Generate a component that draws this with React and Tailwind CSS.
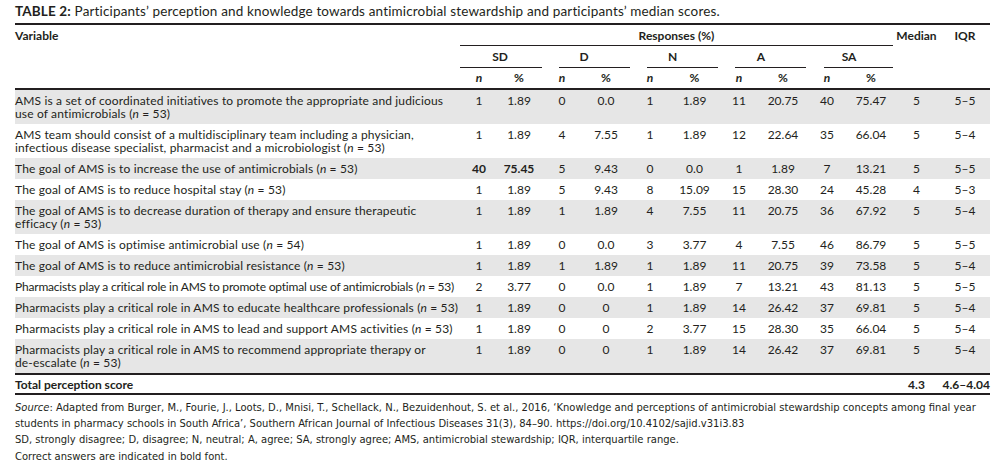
import React from 'react';

const cols = 'grid grid-cols-[445px_38px_42px_44px_44px_44px_45px_44px_44px_44px_44px_47px_50px]';

const rows = [
  {
    label: <>AMS is a set of coordinated initiatives to promote the appropriate and judicious<br />use of antimicrobials (<i>n</i> = 53)</>,
    v: ['1', '1.89', '0', '0.0', '1', '1.89', '11', '20.75', '40', '75.47', '5', '5–5'],
  },
  {
    label: <>AMS team should consist of a multidisciplinary team including a physician,<br />infectious disease specialist, pharmacist and a microbiologist (<i>n</i> = 53)</>,
    v: ['1', '1.89', '4', '7.55', '1', '1.89', '12', '22.64', '35', '66.04', '5', '5–4'],
  },
  {
    label: <>The goal of AMS is to increase the use of antimicrobials (<i>n</i> = 53)</>,
    v: ['40', '75.45', '5', '9.43', '0', '0.0', '1', '1.89', '7', '13.21', '5', '5–5'],
    bold: [0, 1],
  },
  {
    label: <>The goal of AMS is to reduce hospital stay (<i>n</i> = 53)</>,
    v: ['1', '1.89', '5', '9.43', '8', '15.09', '15', '28.30', '24', '45.28', '4', '5–3'],
  },
  {
    label: <>The goal of AMS is to decrease duration of therapy and ensure therapeutic<br />efficacy (<i>n</i> = 53)</>,
    v: ['1', '1.89', '1', '1.89', '4', '7.55', '11', '20.75', '36', '67.92', '5', '5–4'],
  },
  {
    label: <>The goal of AMS is optimise antimicrobial use (<i>n</i> = 54)</>,
    v: ['1', '1.89', '0', '0.0', '3', '3.77', '4', '7.55', '46', '86.79', '5', '5–5'],
  },
  {
    label: <>The goal of AMS is to reduce antimicrobial resistance (<i>n</i> = 53)</>,
    v: ['1', '1.89', '1', '1.89', '1', '1.89', '11', '20.75', '39', '73.58', '5', '5–4'],
  },
  {
    label: <>Pharmacists play a critical role in AMS to promote optimal use of antimicrobials (<i>n</i> = 53)</>,
    v: ['2', '3.77', '0', '0.0', '1', '1.89', '7', '13.21', '43', '81.13', '5', '5–5'],
    tight: true,
  },
  {
    label: <>Pharmacists play a critical role in AMS to educate healthcare professionals (<i>n</i> = 53)</>,
    v: ['1', '1.89', '0', '0', '1', '1.89', '14', '26.42', '37', '69.81', '5', '5–4'],
  },
  {
    label: <>Pharmacists play a critical role in AMS to lead and support AMS activities (<i>n</i> = 53)</>,
    v: ['1', '1.89', '0', '0', '2', '3.77', '15', '28.30', '35', '66.04', '5', '5–4'],
  },
  {
    label: <>Pharmacists play a critical role in AMS to recommend appropriate therapy or<br />de-escalate (<i>n</i> = 53)</>,
    v: ['1', '1.89', '0', '0', '1', '1.89', '14', '26.42', '37', '69.81', '5', '5–4'],
  },
];

const groups = [
  { name: 'SD', line: 'ml-0 -mr-[2px]' },
  { name: 'D', line: 'ml-[19px] -mr-[2px]' },
  { name: 'N', line: 'ml-[19px] -mr-[1px]' },
  { name: 'A', line: 'ml-[18px] -mr-[1px]' },
  { name: 'SA', line: 'ml-[19px] mr-0' },
];

export default function App() {
  return (
    <div className="w-[1005px] h-[467px] bg-white text-[#231f20] font-['Lato',sans-serif] px-[15px]">
      <div className="pt-[4px] pb-[4px] text-[13.5px] leading-[15px] tracking-[0.15px] border-b-2 border-[#231f20] w-[975px] whitespace-nowrap">
        <b>TABLE 2:</b> Participants’ perception and knowledge towards antimicrobial stewardship and participants’ median scores.
      </div>

      <div className="w-[975px] text-[12px] leading-[13px]">
        {/* header */}
        <div className={`${cols} font-bold border-b-2 border-[#231f20]`}>
          <div className="col-start-1 row-start-1 pt-[4px]">Variable</div>
          <div className="col-start-2 col-span-10 row-start-1 pt-[4px] pb-[3px] text-center border-b border-[#231f20]">
            Responses (%)
          </div>
          <div className="col-start-12 row-start-1 pt-[4px] text-center">Median</div>
          <div className="col-start-13 row-start-1 pt-[4px] text-center">IQR</div>

          {groups.map((g, i) => (
            <div key={g.name} className="col-span-2 row-start-2 pt-[4px] text-center" style={{ gridColumnStart: 2 + i * 2 }}>
              <div className="pb-[4px]">{g.name}</div>
              <div className={`border-b border-[#231f20] ${g.line}`} />
            </div>
          ))}

          {groups.map((g, i) => (
            <React.Fragment key={g.name + 'h'}>
              <div className="row-start-3 pt-[3px] pb-[4px] text-center italic" style={{ gridColumnStart: 2 + i * 2 }}>n</div>
              <div className="row-start-3 pt-[3px] pb-[4px] text-center" style={{ gridColumnStart: 3 + i * 2 }}>%</div>
            </React.Fragment>
          ))}
        </div>

        {/* body */}
        {rows.map((r, i) => (
          <div key={i} className={`${cols} ${i % 2 === 0 ? 'bg-[#e6e6e6]' : 'bg-white'} pt-[4px] pb-[4px]`}>
            <div className={`whitespace-nowrap ${r.tight ? 'tracking-[-0.2px]' : 'tracking-[0.15px]'}`}>{r.label}</div>
            {r.v.map((v, j) => (
              <div key={j} className={`text-center ${r.bold && r.bold.includes(j) ? 'font-bold' : ''}`}>{v}</div>
            ))}
          </div>
        ))}

        {/* total */}
        <div className={`${cols} font-bold border-t-2 border-b-2 border-[#231f20] pt-[3px] pb-[2px]`}>
          <div>Total perception score</div>
          <div className="col-start-12 text-center">4.3</div>
          <div className="col-start-13 text-right">4.6–4.04</div>
        </div>
      </div>

      <div className="pt-[5px] text-[11.1px] leading-[15.5px] font-['Liberation_Sans_Narrow','DejaVu_Sans_Condensed',sans-serif] w-[990px] whitespace-nowrap">
        <p>
          <i>Source</i>: Adapted from Burger, M., Fourie, J., Loots, D., Mnisi, T., Schellack, N., Bezuidenhout, S. et al., 2016, ‘Knowledge and perceptions of antimicrobial stewardship concepts among final year
          <br />
          students in pharmacy schools in South Africa’, Southern African Journal of Infectious Diseases 31(3), 84–90. https://doi.org/10.4102/sajid.v31i3.83
        </p>
        <p className="mt-[1px]">SD, strongly disagree; D, disagree; N, neutral; A, agree; SA, strongly agree; AMS, antimicrobial stewardship; IQR, interquartile range.</p>
        <p className="mt-[1px]">Correct answers are indicated in bold font.</p>
      </div>
    </div>
  );
}
